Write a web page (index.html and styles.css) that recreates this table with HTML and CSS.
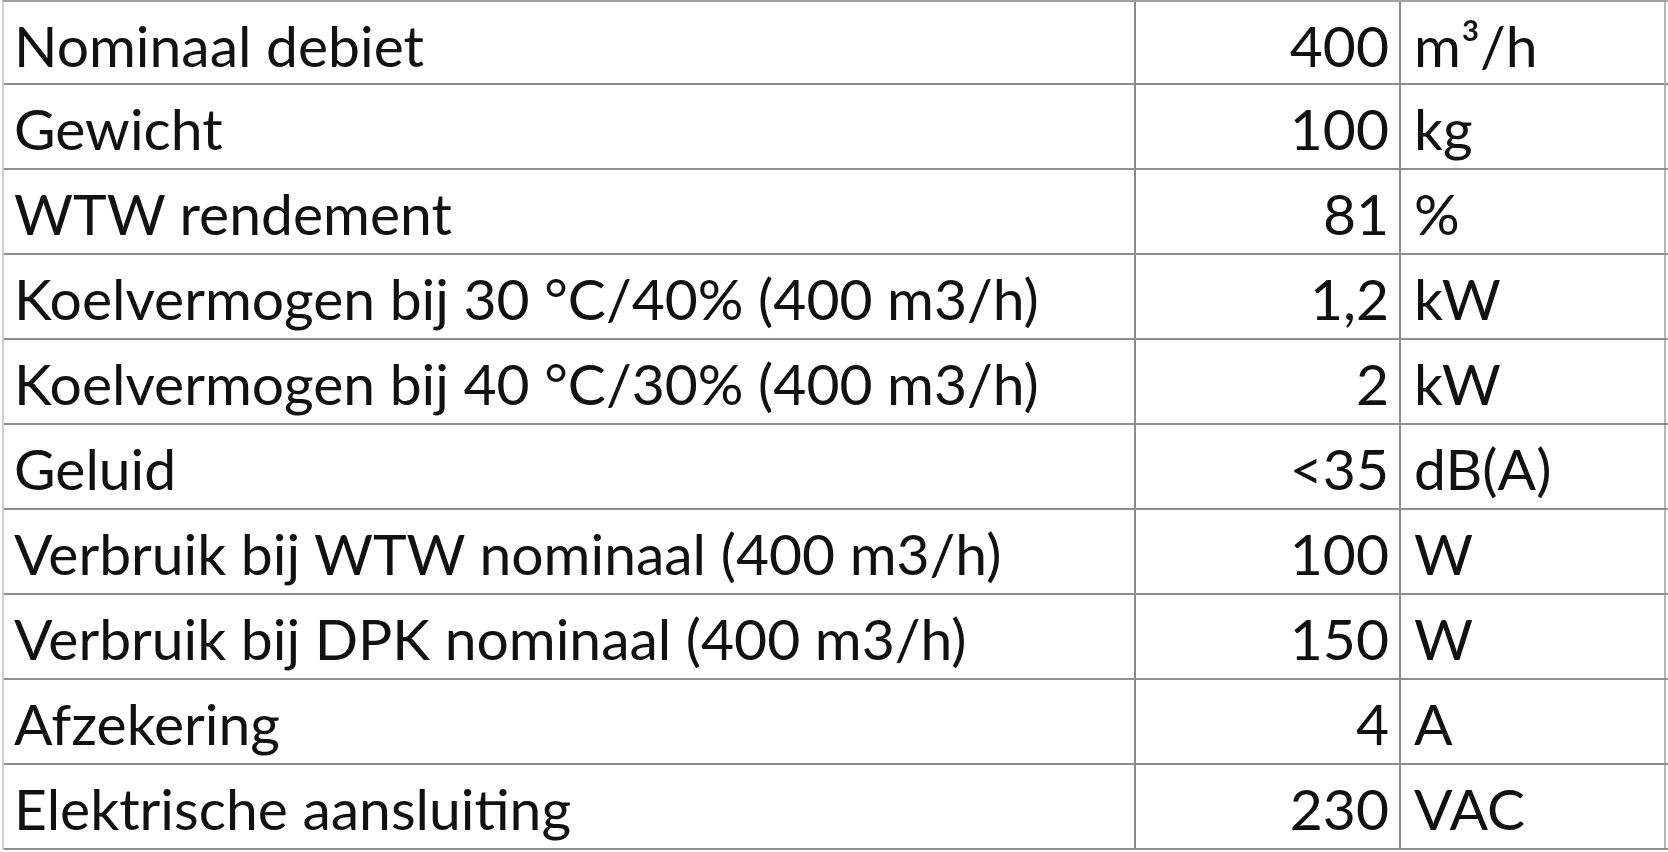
FILE: index.html
```html
<!DOCTYPE html>
<html lang="nl">
<head>
<meta charset="utf-8">
<title>Specificaties</title>
<link rel="stylesheet" href="styles.css">
</head>
<body>
<div class="spec">
  <div class="row"><div class="label">Nominaal debiet</div><div class="value">400</div><div class="unit">m³/h</div></div>
  <div class="row"><div class="label">Gewicht</div><div class="value">100</div><div class="unit">kg</div></div>
  <div class="row"><div class="label">WTW rendement</div><div class="value">81</div><div class="unit">%</div></div>
  <div class="row"><div class="label">Koelvermogen bij 30 °C/40% (400 m3/h)</div><div class="value">1,2</div><div class="unit">kW</div></div>
  <div class="row"><div class="label">Koelvermogen bij 40 °C/30% (400 m3/h)</div><div class="value">2</div><div class="unit">kW</div></div>
  <div class="row"><div class="label">Geluid</div><div class="value">&lt;35</div><div class="unit">dB(A)</div></div>
  <div class="row"><div class="label">Verbruik bij WTW nominaal (400 m3/h)</div><div class="value">100</div><div class="unit">W</div></div>
  <div class="row"><div class="label">Verbruik bij DPK nominaal (400 m3/h)</div><div class="value">150</div><div class="unit">W</div></div>
  <div class="row"><div class="label">Afzekering</div><div class="value">4</div><div class="unit">A</div></div>
  <div class="row"><div class="label">Elektrische aansluiting</div><div class="value">230</div><div class="unit">VAC</div></div>
</div>
</body>
</html>
```
FILE: styles.css
```css
html, body {
  margin: 0;
  padding: 0;
  background: #ffffff;
}
body {
  width: 1668px;
  height: 852px;
  overflow: hidden;
  font-family: "Lato", "Liberation Sans", sans-serif;
  color: #111111;
}
.spec {
  margin-left: 2px;
  width: 1664px;
  border-top: 2px solid #a0a0a0;
  border-left: 2px solid #cfcfcf;
  display: flex;
  flex-direction: column;
}
.row {
  display: grid;
  grid-template-columns: 1132px 265px 265px;
  height: 85px;
  box-sizing: border-box;
  border-bottom: 2px solid #8f8f8f;
}
.row:first-child {
  height: 83px;
}
.row > div {
  font-size: 57px;
  line-height: 77px;
  padding-top: 5px;
  white-space: nowrap;
  border-right: 2px solid #8a8a8a;
  box-sizing: border-box;
}
.label {
  padding-left: 10px;
}
.value {
  text-align: right;
  padding-right: 10px;
}
.unit {
  padding-left: 13px;
}
.row > .unit {
  border-right-color: #b5b5b5;
}
```
